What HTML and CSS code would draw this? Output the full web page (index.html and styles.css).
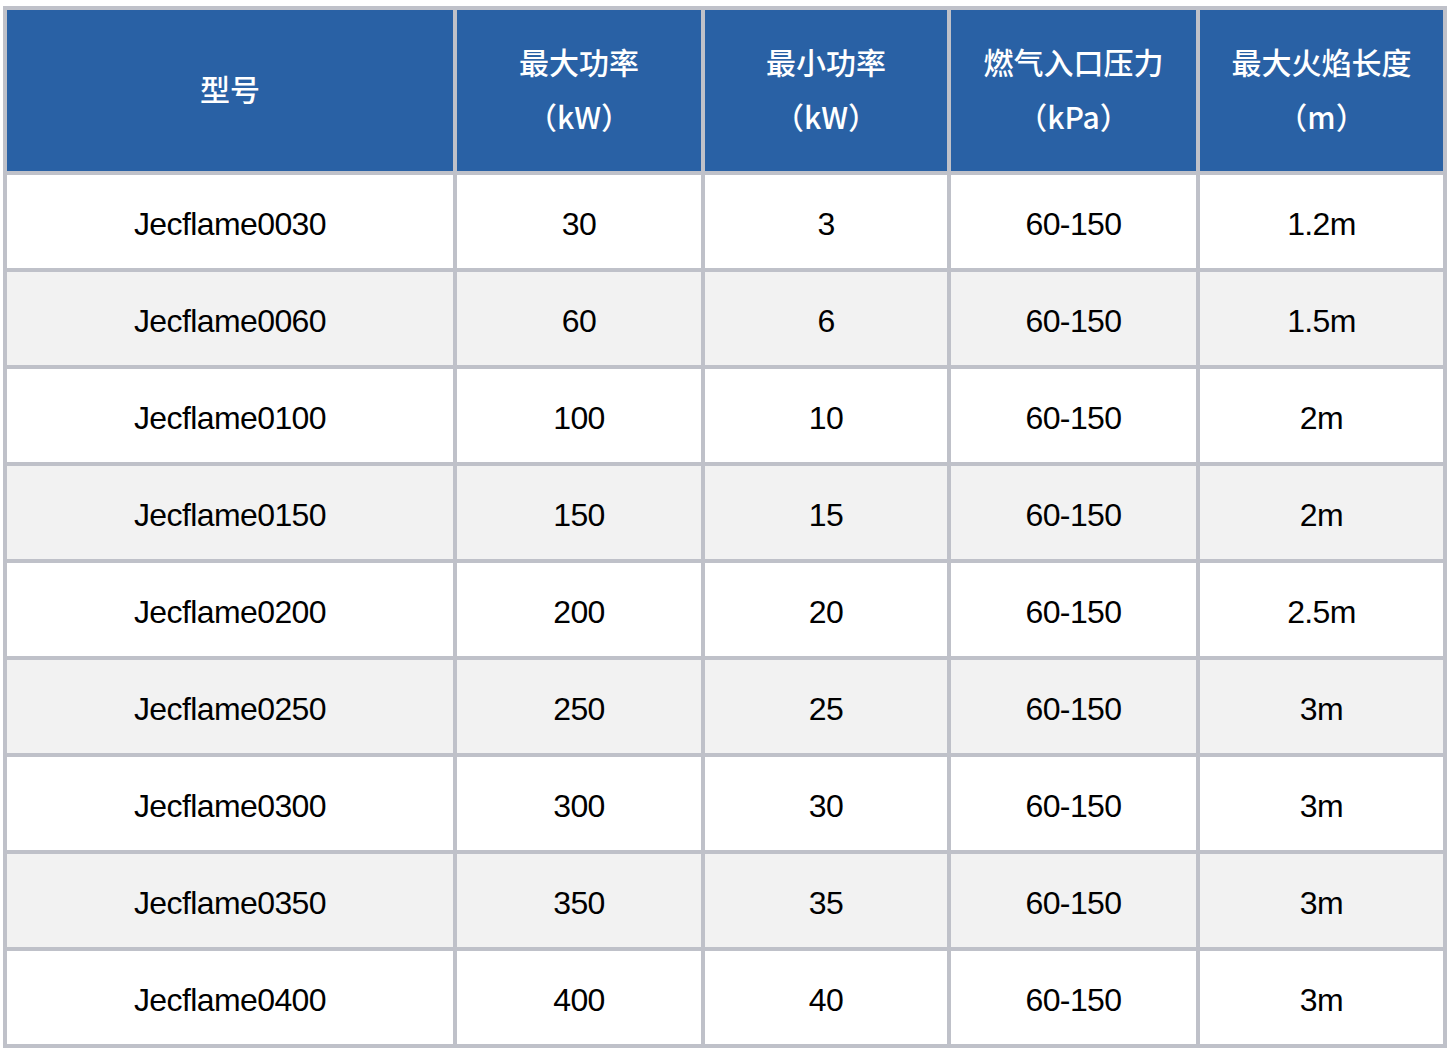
FILE: index.html
```html
<!DOCTYPE html>
<html lang="zh">
<head>
<meta charset="utf-8">
<title>Jecflame</title>
<link rel="stylesheet" href="styles.css">
</head>
<body>
<table class="spec">
  <colgroup>
    <col class="c1"><col class="c2"><col class="c3"><col class="c4"><col class="c5">
  </colgroup>
  <thead>
    <tr class="head">
      <th>型号</th>
      <th>最大功率<br>（kW）</th>
      <th>最小功率<br>（kW）</th>
      <th>燃气入口压力<br>（kPa）</th>
      <th>最大火焰长度<br>（m）</th>
    </tr>
  </thead>
  <tbody>
    <tr><td>Jecflame0030</td><td>30</td><td>3</td><td>60-150</td><td>1.2m</td></tr>
    <tr><td>Jecflame0060</td><td>60</td><td>6</td><td>60-150</td><td>1.5m</td></tr>
    <tr><td>Jecflame0100</td><td>100</td><td>10</td><td>60-150</td><td>2m</td></tr>
    <tr><td>Jecflame0150</td><td>150</td><td>15</td><td>60-150</td><td>2m</td></tr>
    <tr><td>Jecflame0200</td><td>200</td><td>20</td><td>60-150</td><td>2.5m</td></tr>
    <tr><td>Jecflame0250</td><td>250</td><td>25</td><td>60-150</td><td>3m</td></tr>
    <tr><td>Jecflame0300</td><td>300</td><td>30</td><td>60-150</td><td>3m</td></tr>
    <tr><td>Jecflame0350</td><td>350</td><td>35</td><td>60-150</td><td>3m</td></tr>
    <tr><td>Jecflame0400</td><td>400</td><td>40</td><td>60-150</td><td>3m</td></tr>
  </tbody>
</table>
</body>
</html>
```
FILE: styles.css
```css
html, body {
  margin: 0;
  padding: 0;
  background: #ffffff;
}
body {
  padding: 6px 0 0 3px;
}
.spec {
  table-layout: fixed;
  width: 1444px;
  border-collapse: separate;
  border-spacing: 4px;
  background: #bfc1c9;
}
.c1 { width: 446px; }
.c2 { width: 244px; }
.c3 { width: 242px; }
.c4 { width: 245px; }
.c5 { width: 243px; }
.spec th, .spec td {
  padding: 0;
  text-align: center;
  vertical-align: middle;
}
.head th {
  height: 157px;
  padding-bottom: 4px;
  background: #2961a5;
  color: #ffffff;
  font-family: "Noto Sans CJK SC", "Noto Sans", sans-serif;
  font-weight: 500;
  font-size: 30px;
  line-height: 55px;
}
.spec td {
  height: 88px;
  padding-top: 5px;
  background: #ffffff;
  color: #000000;
  font-family: "Liberation Sans", Arial, sans-serif;
  font-size: 32px;
  letter-spacing: -0.6px;
  line-height: 36px;
}
.spec tbody tr:nth-child(even) td {
  background: #f2f2f2;
}
```
